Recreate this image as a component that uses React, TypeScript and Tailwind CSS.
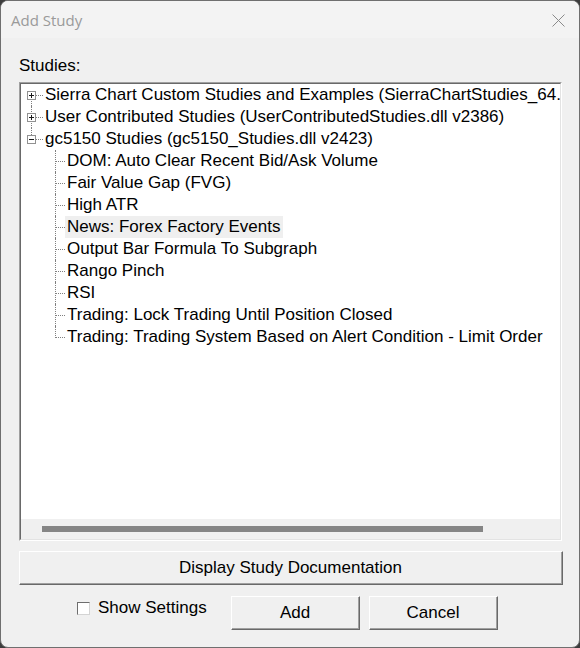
import type { ReactNode } from 'react'

const font = { fontFamily: '"Liberation Sans", Arial, sans-serif' }

type Node = { label: string; open?: boolean; children?: string[] }

const studies: Node[] = [
  { label: 'Sierra Chart Custom Studies and Examples (SierraChartStudies_64.dll v2423)' },
  { label: 'User Contributed Studies (UserContributedStudies.dll v2386)' },
  {
    label: 'gc5150 Studies (gc5150_Studies.dll v2423)',
    open: true,
    children: [
      'DOM: Auto Clear Recent Bid/Ask Volume',
      'Fair Value Gap (FVG)',
      'High ATR',
      'News: Forex Factory Events',
      'Output Bar Formula To Subgraph',
      'Rango Pinch',
      'RSI',
      'Trading: Lock Trading Until Position Closed',
      'Trading: Trading System Based on Alert Condition - Limit Order',
    ],
  },
]

const selected = 'News: Forex Factory Events'

function Expander({ open }: { open?: boolean }) {
  return (
    <span className="absolute left-[6px] top-[7px] w-[9px] h-[9px] border border-[#919191] bg-white">
      <span className="absolute left-[1px] top-[3px] w-[5px] h-px bg-[#1a1a1a]" />
      {!open && <span className="absolute left-[3px] top-[1px] w-px h-[5px] bg-[#1a1a1a]" />}
    </span>
  )
}

function Label({ text }: { text: string }) {
  const sel = text === selected
  return (
    <span className={'px-[2px] leading-[22px] h-[22px] ' + (sel ? 'bg-[#efefef]' : '')}>{text}</span>
  )
}

function RootRow({ node, first, last }: { node: Node; first: boolean; last: boolean }) {
  return (
    <div className="flex h-[22px]">
      <div className="relative w-[22px] h-[22px] shrink-0">
        <span
          className={
            'absolute left-[10px] w-0 border-l border-dotted border-[#808080] ' +
            (first ? 'top-[11px] bottom-0' : last ? 'top-0 h-[11px]' : 'top-0 bottom-0')
          }
        />
        <span className="absolute left-[15px] top-[11px] w-[7px] h-0 border-t border-dotted border-[#808080]" />
        <Expander open={node.open} />
      </div>
      <Label text={node.label} />
    </div>
  )
}

function ChildRow({ text, last }: { text: string; last: boolean }) {
  return (
    <div className="flex h-[22px]">
      <div className="relative w-[44px] h-[22px] shrink-0">
        <span
          className={
            'absolute left-[34px] w-0 border-l border-dotted border-[#808080] ' +
            (last ? 'top-0 h-[12px]' : 'top-0 bottom-0')
          }
        />
        <span className="absolute left-[35px] top-[11px] w-[9px] h-0 border-t border-dotted border-[#808080]" />
      </div>
      <Label text={text} />
    </div>
  )
}

function Button({ children, className }: { children: ReactNode; className?: string }) {
  return (
    <div
      className={
        'border-t border-l border-white border-b border-r border-b-[#696969] border-r-[#696969] bg-[#f0f0f0] ' +
        (className ?? '')
      }
    >
      <div className="h-full border-b border-r border-[#a0a0a0] flex items-center justify-center text-[17px] text-black">
        {children}
      </div>
    </div>
  )
}

export default function App() {
  return (
    <div className="w-[580px] h-[648px] bg-[#3c3c3c]" style={font}>
      <div className="w-full h-full rounded-[8px] border border-[#6f6f6f] bg-[#f0f0f0] overflow-hidden flex flex-col">
        {/* title bar */}
        <div className="h-[37px] shrink-0 bg-[#f3f3f3] flex items-center justify-between pl-[10px] pr-[14px]">
          <span
            className="text-[15px] text-[#9a9a9a] mt-[1px]"
            style={{ fontFamily: '"Open Sans", "Noto Sans", sans-serif' }}
          >
            Add Study
          </span>
          <svg width="13" height="13" viewBox="0 0 13 13" className="mt-[2px]">
            <path d="M0.5 0.5 L12.5 12.5 M12.5 0.5 L0.5 12.5" stroke="#8a8a8a" strokeWidth="1" fill="none" />
          </svg>
        </div>

        <div className="flex flex-col pl-[18px]">
          <div className="mt-[19px] h-[18px] leading-[18px] text-[17px] text-black">Studies:</div>

          {/* tree view */}
          <div className="mt-[7px] w-[543px] h-[459px] border-t border-l border-[#a0a0a0] border-b-white border-r-white border-b border-r">
            <div className="w-full h-full border-t border-l border-[#696969] border-b border-r border-b-[#e3e3e3] border-r-[#e3e3e3] flex flex-col">
              <div className="h-[435px] bg-white overflow-hidden whitespace-nowrap text-[17px] text-black">
                {studies.map((s, i) => (
                  <div key={s.label}>
                    <RootRow node={s} first={i === 0} last={i === studies.length - 1} />
                    {s.open &&
                      s.children?.map((c, j) => (
                        <ChildRow key={c} text={c} last={j === (s.children?.length ?? 0) - 1} />
                      ))}
                  </div>
                ))}
              </div>
              <div className="flex-1 bg-[#f0f0f0]">
                <div className="ml-[21px] mt-[7px] w-[441px] h-[6px] bg-[#858585]" />
              </div>
            </div>
          </div>

          <Button className="mt-[10px] w-[544px] h-[34px]">Display Study Documentation</Button>

          <div className="mt-[11px] flex items-start">
            <div className="ml-[58px] w-[154px] pt-[3px] flex items-center gap-[8px] h-[21px]">
              <span className="w-[13px] h-[13px] bg-white border border-t-[#6e6e6e] border-l-[#6e6e6e] border-b-[#d4d4d4] border-r-[#d4d4d4]" />
              <span className="text-[17px] leading-[18px] text-black">Show Settings</span>
            </div>
            <Button className="w-[129px] h-[34px]">Add</Button>
            <Button className="ml-[9px] w-[129px] h-[34px]">Cancel</Button>
          </div>
        </div>
      </div>
    </div>
  )
}
